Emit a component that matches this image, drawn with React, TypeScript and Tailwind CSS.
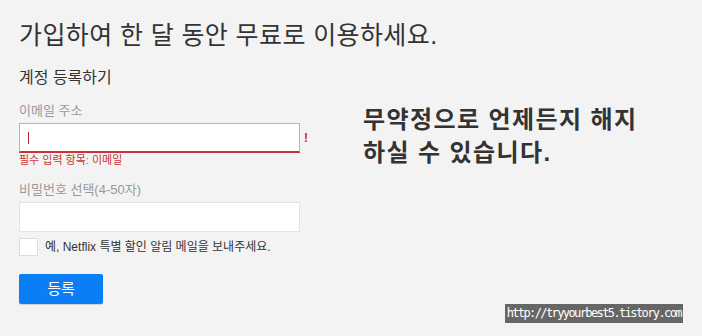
import React from 'react';

const font = { fontFamily: '"Liberation Sans", "Noto Sans CJK KR", sans-serif' };

export default function App() {
  return (
    <div
      className="w-[702px] h-[336px] bg-[#f3f3f3] text-[#333] overflow-hidden flex flex-col"
      style={font}
    >
      <div className="pl-[19px] pt-[18px]">
        <h1 className="text-[25px] leading-[34px] font-normal tracking-[0.4px] text-[#333]">
          가입하여 한 달 동안 무료로 이용하세요.
        </h1>
        <h2 className="mt-[15px] text-[16px] leading-[22px] text-[#333]">계정 등록하기</h2>
      </div>

      <div className="flex pl-[19px]">
        <div className="w-[300px] flex flex-col">
          <label className="mt-[13px] text-[13px] leading-[17px] text-[#999]">이메일 주소</label>
          <div className="mt-[4px] flex items-center">
            <div className="w-[281px] h-[30px] bg-white border border-[#e8a0a0] border-b-2 border-b-[#c83232] flex items-center pl-[8px]">
              <div className="w-[1px] h-[12px] bg-[#b22]" />
            </div>
            <span className="ml-[4px] text-[12px] font-bold text-[#d22]">!</span>
          </div>
          <div className="text-[11px] leading-[14px] text-[#c33]">필수 입력 항목: 이메일</div>

          <label className="mt-[14px] text-[13px] leading-[17px] text-[#999]">비밀번호 선택(4-50자)</label>
          <div className="mt-[4px] w-[281px] h-[30px] bg-white border border-[#e3e3e3]" />

          <div className="mt-[6px] flex items-center">
            <div className="w-[19px] h-[18px] bg-white border border-[#ddd]" />
            <span className="ml-[7px] text-[12px] text-[#333]">
              예, Netflix 특별 할인 알림 메일을 보내주세요.
            </span>
          </div>

          <button className="mt-[18px] w-[84px] h-[30px] bg-[#0a7ff5] text-white text-[15px] rounded-[2px] shadow-[0_1px_1px_rgba(0,0,0,0.15)]">
            등록
          </button>
        </div>

        <div className="ml-[44px] mt-[14px] text-[24px] font-bold leading-[33px] tracking-[1.4px] text-[#333]">
          <div>무약정으로 언제든지 해지</div>
          <div>하실 수 있습니다.</div>
        </div>
      </div>

      <div className="flex justify-end pr-[19px] mt-auto mb-[15px]">
        <span className="bg-[#666] text-white text-[12px] leading-[19px] px-[2px]" style={{ fontFamily: '"DejaVu Sans Mono", monospace', letterSpacing: '-1.6px' }}>
          http://tryyourbest5.tistory.com
        </span>
      </div>
    </div>
  );
}
